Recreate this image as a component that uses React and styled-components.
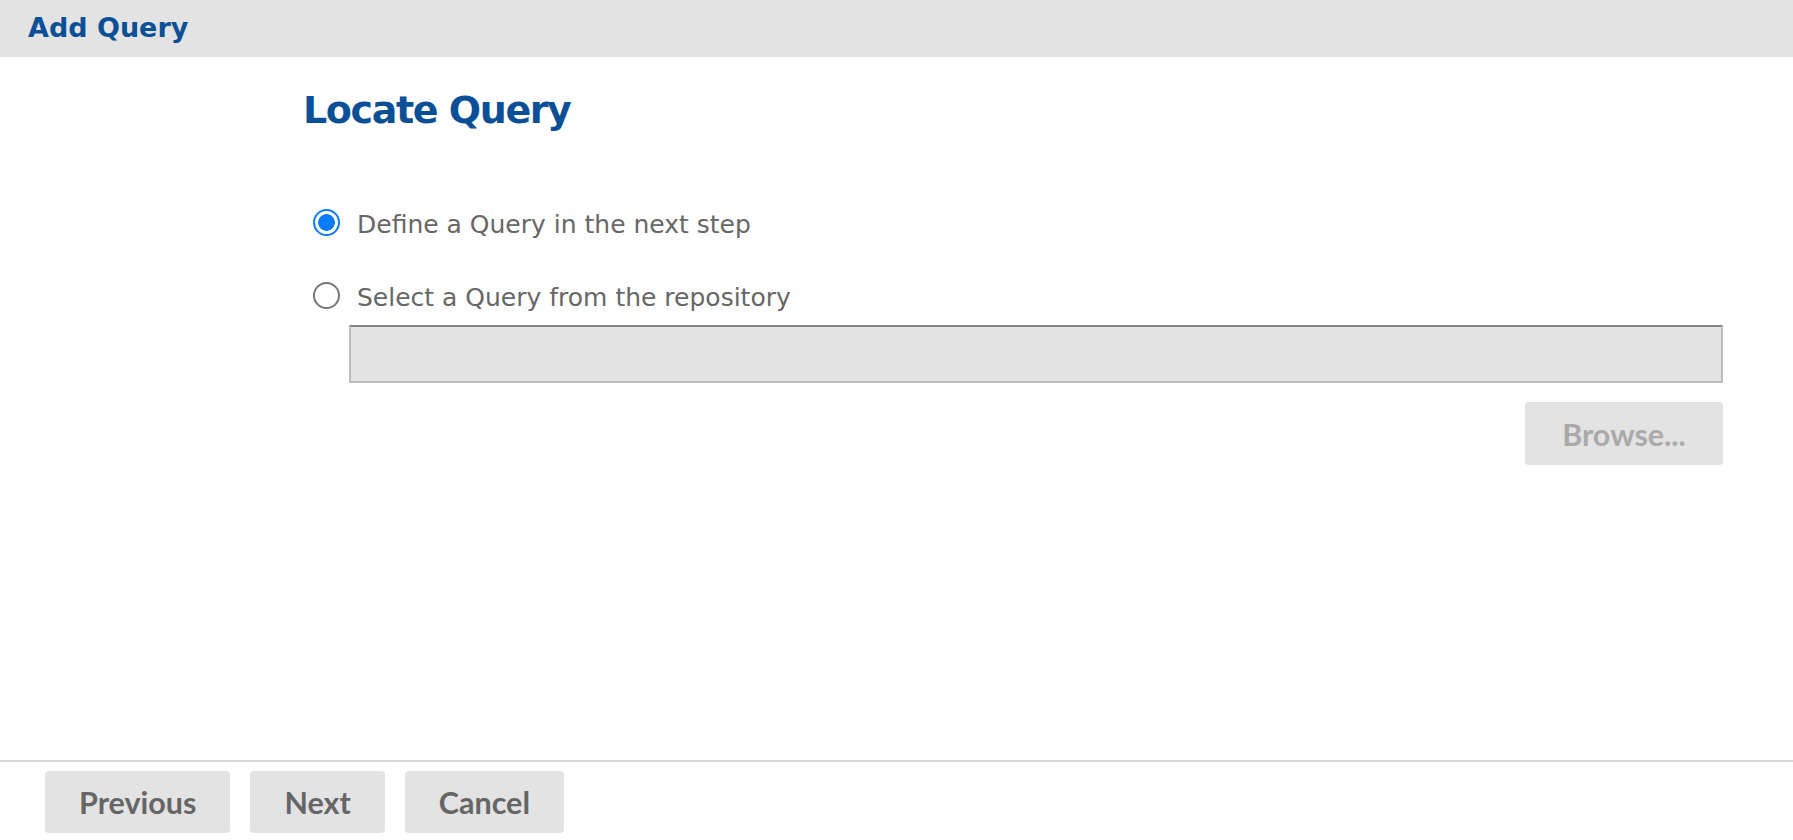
import React, { useState } from "react";
import styled, { createGlobalStyle } from "styled-components";

const GlobalStyle = createGlobalStyle`
  html, body {
    margin: 0;
    padding: 0;
    background: #fff;
  }
  * {
    box-sizing: border-box;
  }
`;

const Page = styled.div`
  display: flex;
  flex-direction: column;
  height: 100vh;
  font-family: "DejaVu Sans", Verdana, sans-serif;
`;

const Header = styled.header`
  display: flex;
  align-items: center;
  height: 57px;
  padding: 0 0 3px 28px;
  background-color: #e3e3e3;
`;

const HeaderTitle = styled.h1`
  margin: 0;
  font-size: 27px;
  font-weight: bold;
  color: #0b5097;
`;

const Main = styled.main`
  flex: 1;
  display: flex;
  flex-direction: column;
  padding: 31px 70px 0 303px;
`;

const Title = styled.h2`
  margin: 0;
  font-size: 38px;
  line-height: 44px;
  letter-spacing: -1.4px;
  font-weight: bold;
  color: #0b5097;
`;

const Options = styled.div`
  display: flex;
  flex-direction: column;
  gap: 42px;
  margin-top: 77px;
`;

const Option = styled.label`
  display: flex;
  align-items: center;
  font-size: 25px;
  line-height: 30px;
  color: #676767;
  cursor: pointer;
`;

const Radio = styled.input.attrs({ type: "radio" })`
  appearance: none;
  flex: none;
  width: 27px;
  height: 27px;
  margin: 0 17px 4px 10px;
  border-radius: 50%;
  border: 2px solid #767676;
  background: #fff;
  cursor: pointer;

  &:checked {
    border-color: #0b7bff;
    background: radial-gradient(circle, #0b7bff 0 8px, #fff 8.6px);
  }
`;

const PathInput = styled.input`
  height: 58px;
  margin: 12px 0 0 46px;
  padding: 0 12px;
  border: 2px solid #bdbdbd;
  border-top-color: #838383;
  background-color: #e3e3e3;
  font-family: inherit;
  font-size: 22px;
  color: #555;
  outline: none;
`;

const BrowseRow = styled.div`
  display: flex;
  justify-content: flex-end;
  margin-top: 19px;
`;

const Button = styled.button`
  height: ${({ $tall }) => ($tall ? "63px" : "62px")};
  min-width: ${({ $width }) => $width || "auto"};
  padding: 0 34px;
  border: none;
  border-radius: 4px;
  background-color: #e3e3e3;
  font-family: Lato, "Open Sans", sans-serif;
  font-weight: 700;
  font-size: 30.5px;
  color: ${({ disabled }) => (disabled ? "#aaaaaa" : "#666666")};
  cursor: ${({ disabled }) => (disabled ? "default" : "pointer")};
`;

const Footer = styled.footer`
  display: flex;
  gap: 20px;
  padding: 9px 0 7px 45px;
  border-top: 2px solid #d6d6d6;
`;

const App = () => {
  const [mode, setMode] = useState("define");
  const [path, setPath] = useState("");

  const fromRepo = mode === "repository";

  return (
    <>
      <GlobalStyle />
      <Page>
        <Header>
          <HeaderTitle>Add Query</HeaderTitle>
        </Header>
        <Main>
          <Title>Locate Query</Title>
          <Options>
            <Option>
              <Radio
                name="locate"
                checked={mode === "define"}
                onChange={() => setMode("define")}
              />
              Define a Query in the next step
            </Option>
            <Option>
              <Radio
                name="locate"
                checked={fromRepo}
                onChange={() => setMode("repository")}
              />
              Select a Query from the repository
            </Option>
          </Options>
          <PathInput
            value={path}
            disabled={!fromRepo}
            onChange={(e) => setPath(e.target.value)}
          />
          <BrowseRow>
            <Button $tall $width="198px" disabled={!fromRepo}>
              Browse...
            </Button>
          </BrowseRow>
        </Main>
        <Footer>
          <Button>Previous</Button>
          <Button>Next</Button>
          <Button>Cancel</Button>
        </Footer>
      </Page>
    </>
  );
};

export default App;
